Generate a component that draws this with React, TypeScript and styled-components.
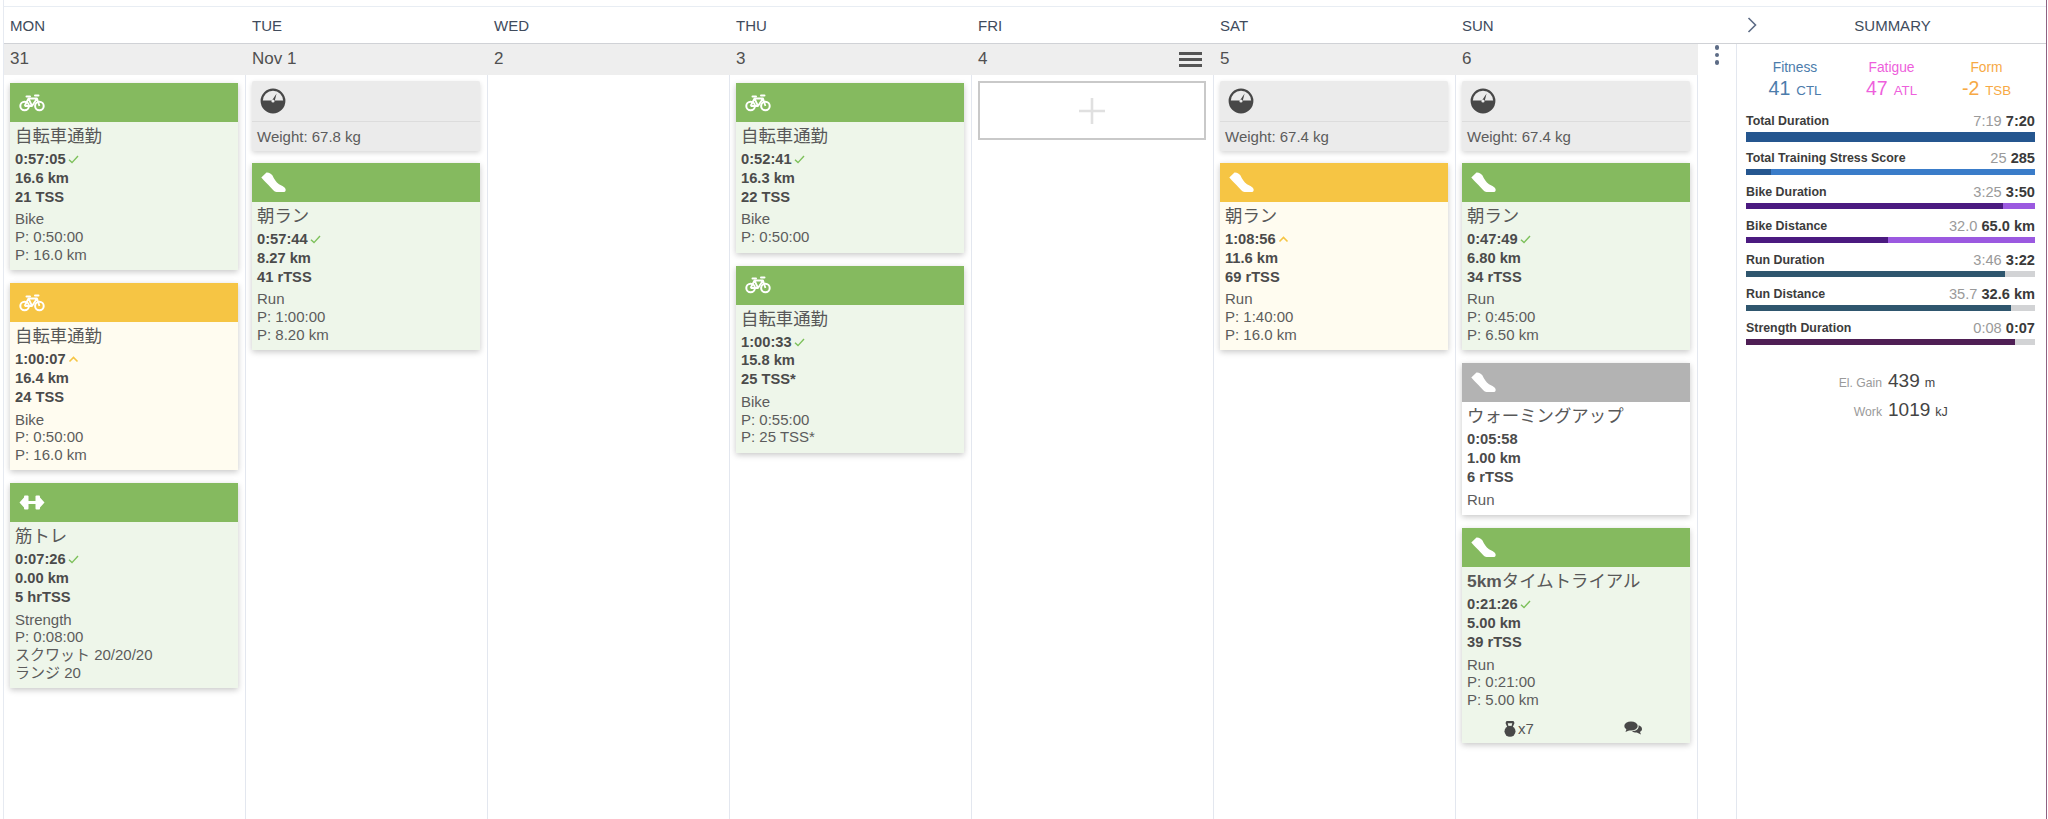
import React from "react";
import styled, { createGlobalStyle } from "styled-components";

const FONT = `"Liberation Sans", "Noto Sans CJK JP", sans-serif`;

const Global = createGlobalStyle`
  html, body { margin: 0; padding: 0; background: #fff; }
  body { font-family: ${FONT}; color: #444; overflow: hidden; }
  * { box-sizing: border-box; }
`;

const Page = styled.div`
  width: 2048px;
  height: 819px;
  padding: 0 1px 0 3px;
`;
const Frame = styled.div`
  height: 100%;
  display: flex;
  flex-direction: column;
  border-left: 1px solid #e6eaf1;
  border-right: 1px solid #8d6283;
  padding-top: 6px;
`;
const HeaderRow = styled.div`
  display: flex;
  height: 38px;
  border-top: 1px solid #e8edf3;
  border-bottom: 1px solid #d0d2d6;
  color: #404b5c;
  font-size: 15px;
  align-items: center;
`;
const DayName = styled.div`
  width: 242px;
  padding-left: 6px;
`;
const HeaderGap = styled.div`
  width: 41px;
`;
const SummaryHead = styled.div`
  flex: 1;
  position: relative;
  text-align: center;
  svg { position: absolute; left: 7px; top: 0; }
`;
const Body = styled.div`
  flex: 1;
  display: flex;
  min-height: 0;
`;
const Day = styled.div`
  width: 242px;
  display: flex;
  flex-direction: column;
`;
const DateCell = styled.div`
  height: 31px;
  flex: none;
  background: #eeeeee;
  display: flex;
  align-items: center;
  justify-content: space-between;
  padding: 0 12px 1px 6px;
  font-size: 17px;
  color: #505050;
`;
const Burger = styled.div`
  width: 23px;
  height: 15px;
  border-top: 3px solid #555;
  border-bottom: 3px solid #555;
  position: relative;
  &::after {
    content: "";
    position: absolute;
    left: 0;
    right: 0;
    top: 3px;
    height: 3px;
    background: #555;
  }
`;
const DayBody = styled.div`
  flex: 1;
  padding: 8px 7px 0 6px;
  border-right: 1px solid #e3e7ef;
`;
const Card = styled.div<{ $tone: "green" | "yellow" | "plain" }>`
  margin-bottom: 13px;
  background: ${(p) => (p.$tone === "green" ? "#eef6ea" : p.$tone === "yellow" ? "#fffcf0" : "#fff")};
  box-shadow: 0 2px 6px rgba(0, 0, 0, 0.22);
  padding-bottom: 7px;
`;
const CardHead = styled.div<{ $tone: "green" | "yellow" | "plain" }>`
  height: 39px;
  background: ${(p) => (p.$tone === "green" ? "#85ba5f" : p.$tone === "yellow" ? "#f6c544" : "#b3b3b3")};
  display: flex;
  align-items: center;
  padding-left: 9px;
  margin-bottom: 1px;
`;
const Title = styled.div`
  font-size: 17.4px;
  line-height: 26px;
  padding: 0 5px;
  color: #585858;
  white-space: nowrap;
  b { font-weight: bold; }
`;
const Stats = styled.div`
  padding: 1px 5px 0;
  margin-bottom: 4px;
  font-size: 14.7px;
  font-weight: bold;
  line-height: 18.8px;
  color: #4b4b4b;
  svg { margin-left: 2px; }
`;
const Info = styled.div`
  padding: 0 5px;
  font-size: 15px;
  line-height: 17.6px;
  color: #5c5c5c;
  white-space: nowrap;
`;
const CardFoot = styled.div`
  display: flex;
  margin-top: 9px;
  margin-bottom: -3px;
  height: 22px;
`;
const FootCell = styled.div`
  flex: 1;
  display: flex;
  align-items: center;
  justify-content: center;
  gap: 2px;
  font-size: 15px;
  color: #555;
`;
const Metric = styled.div`
  margin: -2px 0 12px;
  background: #ebebeb;
  box-shadow: 0 2px 5px rgba(0, 0, 0, 0.16);
  border-radius: 2px;
  height: 70px;
`;
const MetricHead = styled.div`
  height: 41px;
  border-bottom: 1px solid #dcdcdc;
  display: flex;
  align-items: center;
  padding-left: 8px;
`;
const MetricText = styled.div`
  font-size: 15px;
  line-height: 30px;
  padding-left: 5px;
  color: #5c5c5c;
`;
const AddBox = styled.div`
  margin-top: -2px;
  height: 59px;
  border: 2px solid #c9c9c9;
  display: flex;
  align-items: center;
  justify-content: center;
`;
const DotsCol = styled.div`
  width: 39px;
  flex: none;
  border-right: 1px solid #e3e7ef;
  display: flex;
  flex-direction: column;
  align-items: center;
  gap: 3px;
  padding: 1px 0 0 0;
`;
const Dot = styled.span`
  width: 4.5px;
  height: 4.5px;
  border-radius: 50%;
  background: #5d6c86;
`;
const Summary = styled.div`
  flex: 1;
  padding: 16px 11px 0 9px;
`;
const Fitness = styled.div`
  display: grid;
  grid-template-columns: 98px 95px 95px;
  margin-bottom: 9px;
  text-align: center;
`;
const FitnessCell = styled.div<{ $color: string }>`
  color: ${(p) => p.$color};
  font-size: 13.8px;
  line-height: 16px;
`;
const FitnessValue = styled.div`
  font-size: 13.3px;
  line-height: 25px;
  b { font-size: 19.5px; font-weight: normal; margin-right: 6px; }
`;
const SumRow = styled.div<{ $big?: boolean }>`
  margin-bottom: ${(p) => (p.$big ? 7 : 8.5)}px;
`;
const SumLabel = styled.div`
  display: flex;
  justify-content: space-between;
  align-items: center;
  height: 18px;
  margin-bottom: 2px;
  font-size: 12.4px;
  font-weight: bold;
  color: #3c3c3c;
  span:last-child { font-size: 14.6px; font-weight: normal; color: #9a9a9a; }
  b { color: #3a3a3a; }
`;
const Track = styled.div<{ $h: number; $bg: string }>`
  height: ${(p) => p.$h}px;
  width: 289px;
  background: ${(p) => p.$bg};
`;
const Fill = styled.div<{ $color: string }>`
  height: 100%;
  background: ${(p) => p.$color};
`;
const Extras = styled.div`
  display: grid;
  grid-template-columns: 136px 1fr;
  column-gap: 6px;
  row-gap: 3px;
  margin-top: 24px;
  align-items: baseline;
`;
const ExtraLabel = styled.div`
  text-align: right;
  font-size: 12.2px;
  line-height: 24px;
  color: #9a9a9a;
`;
const ExtraValue = styled.div`
  font-size: 12.5px;
  line-height: 24px;
  color: #444;
  b { font-size: 19px; font-weight: normal; margin-right: 5px; }
`;

const Bike = () => (
  <svg width="26" height="18" viewBox="0 0 26 18" fill="none" stroke="#fff">
    <circle cx="5.6" cy="12" r="4.3" strokeWidth="2" />
    <circle cx="20.4" cy="12" r="4.3" strokeWidth="2" />
    <path d="M5.6 12 L9.5 4.5 H18 L20.4 12 M9.5 4.5 L13 12 H5.6 M13 12 L18 4.5" strokeWidth="1.8" strokeLinejoin="round" />
    <path d="M7.5 2.5 H11 M16 1.5 H19.5" strokeWidth="2" strokeLinecap="round" />
  </svg>
);
const Shoe = () => (
  <svg width="25" height="21" viewBox="0 0 25 21" fill="#fff">
    <path d="M0.3 5.5 L5.5 0.5 C8 0.3 10.5 1.8 11.5 3.6 C13 7 15 10.2 18 12.2 C20.5 13.8 23.8 14.5 24.6 17.2 C25 19.2 24 20 22 20 L15.5 20 C13 19.8 11.5 17.2 9.5 15.2 C7 12.5 3.5 9.5 0.3 5.5 Z" />
  </svg>
);
const Dumbbell = () => (
  <svg width="26" height="17" viewBox="0 0 26 17" fill="#fff">
    <path d="M0.5 8.5 L5 3.5 L5 13.5 Z M25.5 8.5 L21 3.5 L21 13.5 Z" />
    <rect x="5" y="1.5" width="4.5" height="14" rx="1" />
    <rect x="16.5" y="1.5" width="4.5" height="14" rx="1" />
    <rect x="9" y="7" width="8" height="3" />
  </svg>
);
const Gauge = () => (
  <svg width="26" height="26" viewBox="0 0 26 26">
    <circle cx="13" cy="13" r="11.3" fill="#ebebeb" stroke="#484848" strokeWidth="2.2" />
    <path d="M1.7 12.5 H24.3 V13 A11.3 11.3 0 0 1 1.7 13 Z" fill="#484848" />
    <path d="M11.6 13 L16.6 5.5 L14.4 14 Z" fill="#484848" />
    <circle cx="13" cy="13" r="1.6" fill="#ebebeb" />
  </svg>
);
const Check = () => (
  <svg width="11" height="9" viewBox="0 0 11 9" fill="none" stroke="#7cc05a" strokeWidth="1.4">
    <path d="M1 4.8 L4 7.6 L10 1" />
  </svg>
);
const Caret = () => (
  <svg width="11" height="9" viewBox="0 0 11 9" fill="none" stroke="#f6c544" strokeWidth="1.6">
    <path d="M1.5 6.5 L5.5 2.5 L9.5 6.5" />
  </svg>
);
const Chevron = () => (
  <svg width="12" height="16" viewBox="0 0 12 16" fill="none" stroke="#5d6c86" strokeWidth="1.6">
    <path d="M2.5 1 L9.5 8 L2.5 15" />
  </svg>
);
const Plus = () => (
  <svg width="26" height="26" viewBox="0 0 26 26" stroke="#e0e0e0" strokeWidth="2.6">
    <path d="M13 0 V26 M0 13 H26" />
  </svg>
);
const Kettlebell = () => (
  <svg width="12" height="17" viewBox="0 0 12 17" fill="#484848">
    <path d="M2.5 1 H9.5 L10.5 3 L8.8 7 H7.2 L8.3 3.2 H3.7 L4.8 7 H3.2 L1.5 3 Z" />
    <circle cx="6" cy="11.3" r="5.5" />
  </svg>
);
const Chat = () => (
  <svg width="18" height="14" viewBox="0 0 18 14" fill="#484848">
    <ellipse cx="7" cy="5" rx="6.7" ry="4.6" />
    <path d="M2.5 8 L1.5 11 L6 9 Z" />
    <path d="M14.6 4.2 C16.8 5 18 6.3 18 8 C18 9.3 17.2 10.2 16 10.9 L17 13.4 L12.8 11.6 C10.8 11.7 9 11 8 10 C12 10.2 15.2 8 14.6 4.2 Z" />
  </svg>
);

type Tone = "green" | "yellow" | "plain";
type Sport = "bike" | "run" | "strength";
interface Workout {
  tone: Tone;
  sport: Sport;
  title: React.ReactNode;
  stats: string[];
  mark?: "check" | "caret";
  info: string[];
  foot?: boolean;
}
type Item = Workout | { weight: string } | { add: true };

const icon: Record<Sport, React.ReactNode> = { bike: <Bike />, run: <Shoe />, strength: <Dumbbell /> };

const commute = "自転車通勤";
const days: { name: string; date: string; menu?: boolean; items: Item[] }[] = [
  {
    name: "MON",
    date: "31",
    items: [
      { tone: "green", sport: "bike", title: commute, stats: ["0:57:05", "16.6 km", "21 TSS"], mark: "check", info: ["Bike", "P: 0:50:00", "P: 16.0 km"] },
      { tone: "yellow", sport: "bike", title: commute, stats: ["1:00:07", "16.4 km", "24 TSS"], mark: "caret", info: ["Bike", "P: 0:50:00", "P: 16.0 km"] },
      { tone: "green", sport: "strength", title: "筋トレ", stats: ["0:07:26", "0.00 km", "5 hrTSS"], mark: "check", info: ["Strength", "P: 0:08:00", "スクワット 20/20/20", "ランジ 20"] },
    ],
  },
  {
    name: "TUE",
    date: "Nov 1",
    items: [
      { weight: "Weight: 67.8 kg" },
      { tone: "green", sport: "run", title: "朝ラン", stats: ["0:57:44", "8.27 km", "41 rTSS"], mark: "check", info: ["Run", "P: 1:00:00", "P: 8.20 km"] },
    ],
  },
  { name: "WED", date: "2", items: [] },
  {
    name: "THU",
    date: "3",
    items: [
      { tone: "green", sport: "bike", title: commute, stats: ["0:52:41", "16.3 km", "22 TSS"], mark: "check", info: ["Bike", "P: 0:50:00"] },
      { tone: "green", sport: "bike", title: commute, stats: ["1:00:33", "15.8 km", "25 TSS*"], mark: "check", info: ["Bike", "P: 0:55:00", "P: 25 TSS*"] },
    ],
  },
  { name: "FRI", date: "4", menu: true, items: [{ add: true }] },
  {
    name: "SAT",
    date: "5",
    items: [
      { weight: "Weight: 67.4 kg" },
      { tone: "yellow", sport: "run", title: "朝ラン", stats: ["1:08:56", "11.6 km", "69 rTSS"], mark: "caret", info: ["Run", "P: 1:40:00", "P: 16.0 km"] },
    ],
  },
  {
    name: "SUN",
    date: "6",
    items: [
      { weight: "Weight: 67.4 kg" },
      { tone: "green", sport: "run", title: "朝ラン", stats: ["0:47:49", "6.80 km", "34 rTSS"], mark: "check", info: ["Run", "P: 0:45:00", "P: 6.50 km"] },
      { tone: "plain", sport: "run", title: "ウォーミングアップ", stats: ["0:05:58", "1.00 km", "6 rTSS"], info: ["Run"] },
      { tone: "green", sport: "run", title: <><b>5km</b>タイムトライアル</>, stats: ["0:21:26", "5.00 km", "39 rTSS"], mark: "check", info: ["Run", "P: 0:21:00", "P: 5.00 km"], foot: true },
    ],
  },
];

const rows = [
  { label: "Total Duration", planned: "7:19", actual: "7:20", pct: 100, h: 10, fill: "#25568f", bg: "#3a7cc9", big: true },
  { label: "Total Training Stress Score", planned: "25", actual: "285", pct: 8.7, h: 5.5, fill: "#25568f", bg: "#3a7cc9" },
  { label: "Bike Duration", planned: "3:25", actual: "3:50", pct: 89, h: 5.5, fill: "#4b1a80", bg: "#9b59e0" },
  { label: "Bike Distance", planned: "32.0", actual: "65.0 km", pct: 49.2, h: 5.5, fill: "#4b1a80", bg: "#9b59e0" },
  { label: "Run Duration", planned: "3:46", actual: "3:22", pct: 89.5, h: 5.5, fill: "#2f566e", bg: "#d2d3d5" },
  { label: "Run Distance", planned: "35.7", actual: "32.6 km", pct: 91.6, h: 5.5, fill: "#2f566e", bg: "#d2d3d5" },
  { label: "Strength Duration", planned: "0:08", actual: "0:07", pct: 93, h: 5.5, fill: "#4f1f55", bg: "#d2d3d5" },
];

const renderItem = (item: Item, i: number) => {
  if ("weight" in item) {
    return (
      <Metric key={i}>
        <MetricHead><Gauge /></MetricHead>
        <MetricText>{item.weight}</MetricText>
      </Metric>
    );
  }
  if ("add" in item) {
    return <AddBox key={i}><Plus /></AddBox>;
  }
  return (
    <Card key={i} $tone={item.tone}>
      <CardHead $tone={item.tone}>{icon[item.sport]}</CardHead>
      <Title>{item.title}</Title>
      <Stats>
        {item.stats.map((s, j) => (
          <div key={j}>
            {s}
            {j === 0 && item.mark === "check" && <Check />}
            {j === 0 && item.mark === "caret" && <Caret />}
          </div>
        ))}
      </Stats>
      <Info>{item.info.map((s, j) => <div key={j}>{s}</div>)}</Info>
      {item.foot && (
        <CardFoot>
          <FootCell><Kettlebell />x7</FootCell>
          <FootCell><Chat /></FootCell>
        </CardFoot>
      )}
    </Card>
  );
};

export default function App() {
  return (
    <Page>
      <Global />
      <Frame>
        <HeaderRow>
          {days.map((d) => <DayName key={d.name}>{d.name}</DayName>)}
          <HeaderGap />
          <SummaryHead><Chevron />SUMMARY</SummaryHead>
        </HeaderRow>
        <Body>
          {days.map((d) => (
            <Day key={d.name}>
              <DateCell>{d.date}{d.menu && <Burger />}</DateCell>
              <DayBody>{d.items.map(renderItem)}</DayBody>
            </Day>
          ))}
          <DotsCol><Dot /><Dot /><Dot /></DotsCol>
          <Summary>
            <Fitness>
              <FitnessCell $color="#4c7cab">Fitness<FitnessValue><b>41</b>CTL</FitnessValue></FitnessCell>
              <FitnessCell $color="#ee5fdc">Fatigue<FitnessValue><b>47</b>ATL</FitnessValue></FitnessCell>
              <FitnessCell $color="#f7a944">Form<FitnessValue><b>-2</b>TSB</FitnessValue></FitnessCell>
            </Fitness>
            {rows.map((r) => (
              <SumRow key={r.label} $big={r.big}>
                <SumLabel>
                  <span>{r.label}</span>
                  <span>{r.planned} <b>{r.actual}</b></span>
                </SumLabel>
                <Track $h={r.h} $bg={r.bg}>
                  <Fill $color={r.fill} style={{ width: `${r.pct}%` }} />
                </Track>
              </SumRow>
            ))}
            <Extras>
              <ExtraLabel>El. Gain</ExtraLabel>
              <ExtraValue><b>439</b>m</ExtraValue>
              <ExtraLabel>Work</ExtraLabel>
              <ExtraValue><b>1019</b>kJ</ExtraValue>
            </Extras>
          </Summary>
        </Body>
      </Frame>
    </Page>
  );
}
